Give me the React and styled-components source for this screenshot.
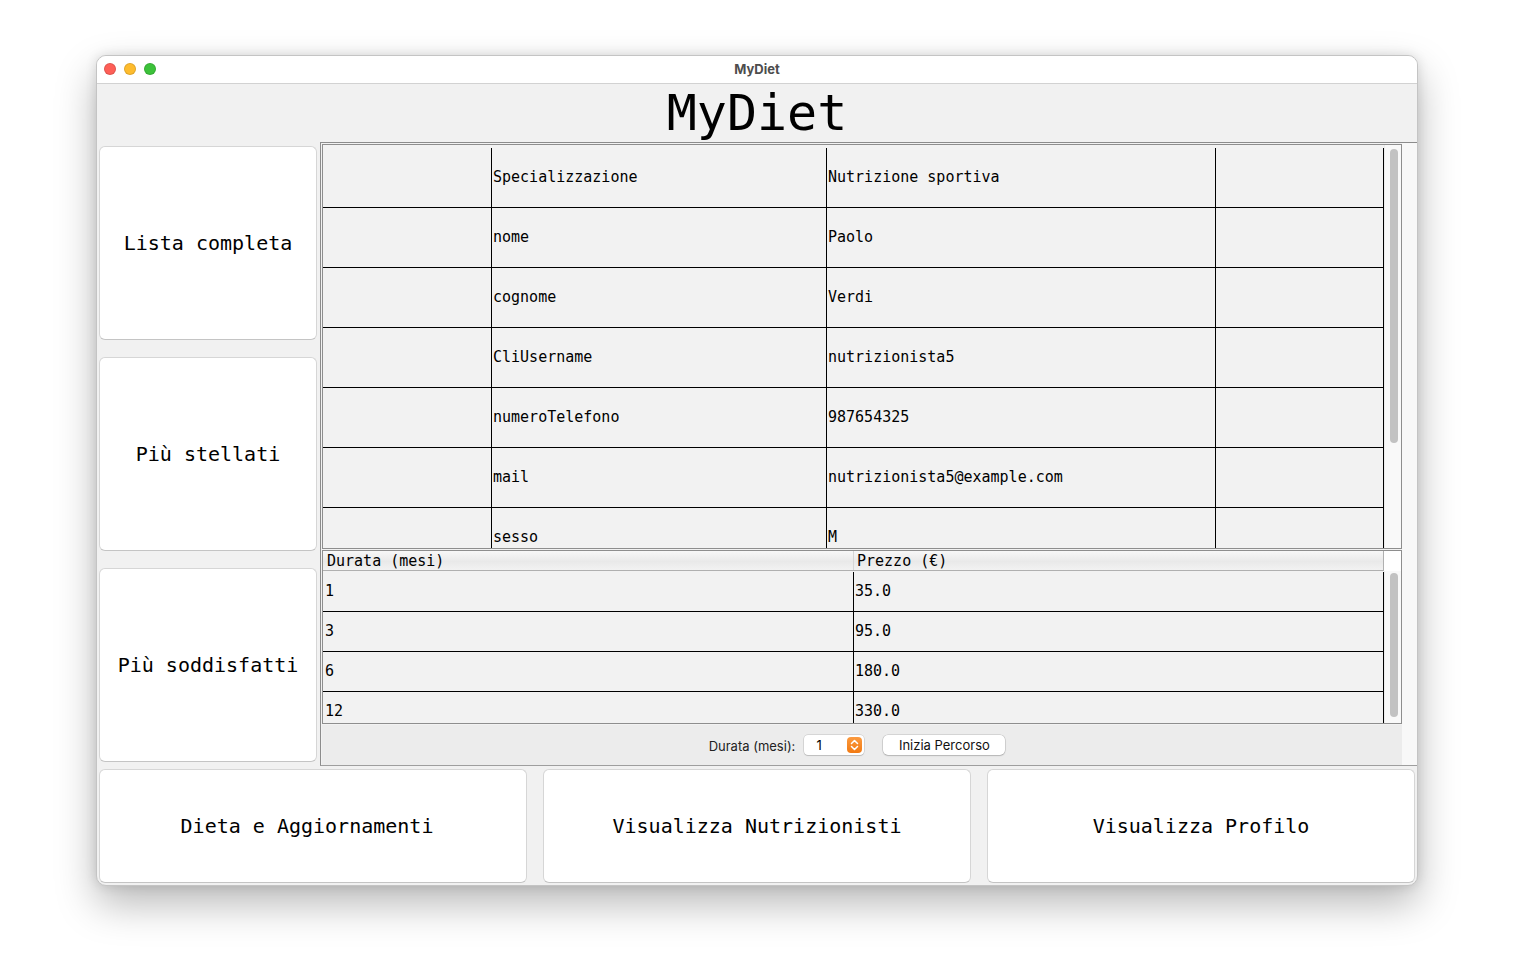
import React from "react";
import styled, { createGlobalStyle } from "styled-components";

const Global = createGlobalStyle`
  html, body { margin: 0; padding: 0; background: #ffffff; }
  body { width: 1519px; height: 962px; overflow: hidden; font-family: "DejaVu Sans Mono", monospace; }
  * { box-sizing: border-box; }
`;

const Page = styled.div`
  padding: 55px 0 0 96px;
`;

const Window = styled.div`
  width: 1322px;
  height: 831px;
  border-radius: 10px;
  border: 1px solid #c4c4c4;
  background: #f1f1f1;
  box-shadow: 0 18px 40px rgba(0, 0, 0, 0.28), 0 0 12px rgba(0, 0, 0, 0.12);
  overflow: hidden;
  display: flex;
  flex-direction: column;
`;

const TitleBar = styled.div`
  height: 28px;
  flex: none;
  background: #ffffff;
  border-bottom: 1px solid #d2d2d2;
  position: relative;
  display: flex;
  align-items: center;
  padding: 0 0 1px 7px;
  gap: 8px;
`;

const Light = styled.span`
  width: 12px;
  height: 12px;
  border-radius: 50%;
  background: ${(p) => p.$c};
  border: 0.5px solid rgba(0, 0, 0, 0.12);
`;

const WinTitle = styled.div`
  position: absolute;
  left: 0;
  right: 0;
  top: 0;
  bottom: 2px;
  display: flex;
  align-items: center;
  justify-content: center;
  font-family: "Inter", "Liberation Sans", sans-serif;
  font-weight: 700;
  font-size: 13px;
  color: #4d4d4d;
  pointer-events: none;
`;

const Heading = styled.div`
  height: 58px;
  flex: none;
  text-align: center;
  font-family: "DejaVu Sans Mono", monospace;
  font-size: 50px;
  line-height: 58px;
  color: #000;
`;

const MainRow = styled.div`
  display: flex;
  height: 624px;
  flex: none;
`;

const SideCol = styled.div`
  width: 223px;
  flex: none;
  padding: 4px 3px 4px 2px;
  display: flex;
  flex-direction: column;
  gap: 17px;
`;

const BigButton = styled.div`
  flex: 1 1 0;
  min-width: 0;
  min-height: 0;
  background: #ffffff;
  border: 1px solid #d6d6d6;
  border-bottom-color: #c4c4c4;
  border-radius: 6px;
  display: flex;
  align-items: center;
  justify-content: center;
  padding-bottom: 1px;
  font-family: "DejaVu Sans Mono", monospace;
  font-size: 20px;
  color: #000;
  white-space: pre;
`;

const Caption = styled.span`
  margin-right: ${(p) => p.$shift || 0}px;
`;

const RightPanel = styled.div`
  flex: 1;
  display: flex;
  border-top: 1px solid #8c8c8c;
  border-left: 1px solid #8c8c8c;
  border-bottom: 1px solid #9e9e9e;
  background: #f2f2f2;
`;

const PanelBody = styled.div`
  width: 1081px;
  flex: none;
  padding: 1px 0 0 1px;
  display: flex;
  flex-direction: column;
  gap: 1px;
`;

const SideStrip = styled.div`
  flex: 1;
  background: #f8f8f8;
`;

const ScrollPane = styled.div`
  height: ${(p) => p.$h}px;
  flex: none;
  border: 1px solid #8e8e8e;
  display: flex;
  background: #f2f2f2;
`;

const Viewport = styled.div`
  width: 1061px;
  flex: none;
  overflow: hidden;
  padding-top: ${(p) => p.$pt || 0}px;
`;

const Track = styled.div`
  flex: 1;
  background: #f9f9f9;
  border-left: 1px solid #ececec;
  padding: ${(p) => p.$pad};
  display: flex;
  flex-direction: column;
  align-items: center;
`;

const Thumb = styled.div`
  width: 8px;
  height: ${(p) => p.$h}px;
  border-radius: 4px;
  background: #c2c2c2;
  margin-left: 1px;
`;

const Row = styled.div`
  display: grid;
  grid-template-columns: ${(p) => p.$cols};
  height: ${(p) => p.$h}px;
`;

const Cell = styled.div`
  border-right: 1px solid #000;
  border-bottom: 1px solid #000;
  display: flex;
  align-items: center;
  padding: 0 0 ${(p) => p.$pb || 0}px ${(p) => p.$pl ?? 1}px;
  font-family: "DejaVu Sans Mono", monospace;
  font-size: 15px;
  color: #000;
  white-space: pre;
  overflow: hidden;
`;

const HeaderRow = styled.div`
  display: flex;
  height: 20px;
  flex: none;
`;

const HeaderCells = styled.div`
  width: 1061px;
  display: grid;
  grid-template-columns: 531px 530px;
  background: linear-gradient(#f8f8f8, #e9e9e9 55%, #f2f2f2);
  border-bottom: 1px solid #b0b0b0;
`;

const HeaderCell = styled.div`
  padding-left: ${(p) => (p.$last ? 3 : 4)}px;
  display: flex;
  align-items: center;
  border-right: 1px solid ${(p) => (p.$last ? "#b0b0b0" : "#d6d6d6")};
  font-family: "DejaVu Sans Mono", monospace;
  font-size: 15px;
  color: #000;
  white-space: pre;
`;

const Corner = styled.div`
  flex: 1;
  background: #ffffff;
`;

const PaneColumn = styled.div`
  display: flex;
  flex-direction: column;
  flex: 1;
  min-width: 0;
`;

const BottomBody = styled.div`
  display: flex;
  flex: 1;
  min-height: 0;
`;

const Controls = styled.div`
  flex: 1;
  background: #ececec;
  display: flex;
  align-items: center;
  justify-content: center;
  padding-right: 10px;
  font-family: "Inter", "Liberation Sans", sans-serif;
  font-size: 13px;
  color: #222;
`;

const Label = styled.span`
  margin-right: 9px;
  padding-top: 1px;
`;

const Spinner = styled.div`
  width: 60px;
  height: 20px;
  background: #fff;
  border-radius: 4px;
  box-shadow: 0 0 0 0.5px rgba(0, 0, 0, 0.18), 0 1px 1px rgba(0, 0, 0, 0.12);
  display: flex;
  align-items: center;
  justify-content: space-between;
  padding: 0 2px 0 12px;
  margin-right: 19px;
  color: #000;
`;

const Stepper = styled.div`
  width: 15px;
  height: 16px;
  border-radius: 4px;
  background: linear-gradient(#fb9a3f, #f27a12);
  display: flex;
  align-items: center;
  justify-content: center;
`;

const PushButton = styled.div`
  width: 122px;
  height: 20px;
  background: #fff;
  border-radius: 5px;
  box-shadow: 0 0 0 0.5px rgba(0, 0, 0, 0.2), 0 1px 1.5px rgba(0, 0, 0, 0.15);
  display: flex;
  align-items: center;
  justify-content: center;
  color: #111;
`;

const BottomRow = styled.div`
  flex: 1;
  display: flex;
  gap: 16px;
  padding: 3px 2px 2px 2px;
`;

const topCols = "169px 335px 389px 168px";
const topRows = [
  ["Specializzazione", "Nutrizione sportiva"],
  ["nome", "Paolo"],
  ["cognome", "Verdi"],
  ["CliUsername", "nutrizionista5"],
  ["numeroTelefono", "987654325"],
  ["mail", "nutrizionista5@example.com"],
  ["sesso", "M"],
];
const priceRows = [
  ["1", "35.0"],
  ["3", "95.0"],
  ["6", "180.0"],
  ["12", "330.0"],
];

export default function App() {
  return (
    <>
      <Global />
      <Page>
        <Window>
          <TitleBar>
            <Light $c="#fe5f57" />
            <Light $c="#febc2e" />
            <Light $c="#3cc23a" />
            <WinTitle>MyDiet</WinTitle>
          </TitleBar>
          <Heading>MyDiet</Heading>
          <MainRow>
            <SideCol>
              <BigButton><Caption>Lista completa</Caption></BigButton>
              <BigButton><Caption>Più stellati</Caption></BigButton>
              <BigButton><Caption>Più soddisfatti</Caption></BigButton>
            </SideCol>
            <RightPanel>
              <PanelBody>
                <ScrollPane $h={405}>
                  <Viewport $pt={3}>
                    {topRows.map(([k, v]) => (
                      <Row key={k} $cols={topCols} $h={60}>
                        <Cell $pb={2} />
                        <Cell $pb={2}>{k}</Cell>
                        <Cell $pb={2}>{v}</Cell>
                        <Cell $pb={2} />
                      </Row>
                    ))}
                  </Viewport>
                  <Track $pad="4px 0 0 0">
                    <Thumb $h={294} />
                  </Track>
                </ScrollPane>
                <ScrollPane $h={174}>
                  <PaneColumn>
                    <HeaderRow>
                      <HeaderCells>
                        <HeaderCell>Durata (mesi)</HeaderCell>
                        <HeaderCell $last>Prezzo (€)</HeaderCell>
                      </HeaderCells>
                      <Corner />
                    </HeaderRow>
                    <BottomBody>
                      <Viewport $pt={1}>
                        {priceRows.map(([d, p]) => (
                          <Row key={d} $cols="531px 530px" $h={40}>
                            <Cell $pb={1} $pl={2}>{d}</Cell>
                            <Cell $pb={1}>{p}</Cell>
                          </Row>
                        ))}
                      </Viewport>
                      <Track $pad="2px 0 0 0">
                        <Thumb $h={144} />
                      </Track>
                    </BottomBody>
                  </PaneColumn>
                </ScrollPane>
                <Controls>
                  <Label>Durata (mesi):</Label>
                  <Spinner>
                    <span>1</span>
                    <Stepper>
                      <svg width="9" height="12" viewBox="0 0 9 12" fill="none">
                        <path d="M1.5 4.5 L4.5 1.5 L7.5 4.5" stroke="#fff" strokeWidth="1.5" strokeLinecap="round" strokeLinejoin="round" />
                        <path d="M1.5 7.5 L4.5 10.5 L7.5 7.5" stroke="#fff" strokeWidth="1.5" strokeLinecap="round" strokeLinejoin="round" />
                      </svg>
                    </Stepper>
                  </Spinner>
                  <PushButton>Inizia Percorso</PushButton>
                </Controls>
              </PanelBody>
              <SideStrip />
            </RightPanel>
          </MainRow>
          <BottomRow>
            <BigButton><Caption $shift={12}>Dieta e Aggiornamenti</Caption></BigButton>
            <BigButton><Caption>Visualizza Nutrizionisti</Caption></BigButton>
            <BigButton><Caption>Visualizza Profilo</Caption></BigButton>
          </BottomRow>
        </Window>
      </Page>
    </>
  );
}
